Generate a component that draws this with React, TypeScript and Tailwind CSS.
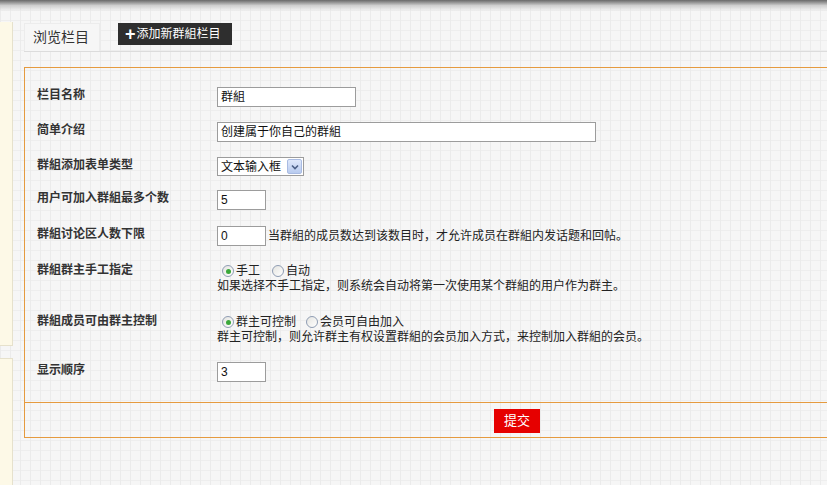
const font = "font-['Liberation_Sans','Noto_Sans_CJK_SC',sans-serif]";

function TextInput({ value, w }: { value: string; w: string }) {
  return (
    <div
      className={`${w} h-[20px] border border-[#9c9c9c] bg-white pl-[3px] text-[12px] leading-[18px] text-[#111]`}
    >
      {value}
    </div>
  );
}

function Radio({ checked, label }: { checked?: boolean; label: string }) {
  return (
    <span className="flex items-center">
      <span className="flex h-[12px] w-[12px] items-center justify-center rounded-full border border-[#8f9db3] bg-[linear-gradient(135deg,#e4e4e0,#ffffff)]">
        {checked && <span className="h-[5px] w-[5px] rounded-full bg-[#3aa83a]" />}
      </span>
      <span className="ml-[2px]">{label}</span>
    </span>
  );
}

function Row({ label, h, children }: { label: string; h: string; children: React.ReactNode }) {
  return (
    <div className={`flex items-start ${h}`}>
      <div className="w-[192px] shrink-0 pl-[12px] pt-[1px] text-[12px] font-bold leading-[14px] text-[#333]">
        {label}
      </div>
      <div className="text-[12px] leading-[14px] text-[#222]">{children}</div>
    </div>
  );
}

export default function App() {
  return (
    <div
      className={`relative h-[485px] w-[827px] overflow-hidden bg-[#f6f6f6] bg-[linear-gradient(to_right,#ebebeb_1px,transparent_1px),linear-gradient(to_bottom,#eeeeee_1px,transparent_1px)] bg-[size:10px_10px] ${font}`}
    >
      {/* top shadow */}
      <div className="absolute inset-x-0 top-0 h-[11px] bg-linear-to-b from-[#6a6a6a] via-[#cfcfcf] to-transparent" />

      <div className="flex h-full">
        {/* left sidebar */}
        <div className="flex w-[13px] shrink-0 flex-col pt-[22px]">
          <div className="h-[324px] border-r border-b border-[#e6e1cc] bg-[#fdf9e7]" />
          <div className="mt-[12px] flex-1 border-r border-t border-[#e6e1cc] bg-[#fdf9e7]" />
        </div>

        <div className="pl-[11px] pt-[23px]">
          {/* tabs */}
          <div className="flex h-[29px] w-[820px] items-start border-b border-[#dcdcdc]">
            <div className="flex h-[28px] w-[76px] items-center border border-b-0 border-[#ececec] bg-[#f6f6f6] pl-[8px] text-[14px] text-[#333]">
              浏览栏目
            </div>
            <div className="ml-[18px] flex h-[22px] w-[114px] items-center bg-[#2e2e2e] pl-[7px] text-[12px] text-white">
              <span className="mr-[1px] text-[18px] font-extrabold leading-none">+</span>
              添加新群組栏目
            </div>
          </div>

          {/* form box */}
          <div className="mt-[15px] w-[820px] border border-[#e59a3e]">
            <div className="pt-[19px]">
              <Row label="栏目名称" h="h-[35px]">
                <TextInput value="群組" w="w-[139px]" />
              </Row>
              <Row label="简单介绍" h="h-[35px]">
                <TextInput value="创建属于你自己的群組" w="w-[379px]" />
              </Row>
              <Row label="群組添加表单类型" h="h-[33px]">
                <div className="flex h-[19px] w-[87px] items-center border border-[#9c9c9c] bg-white">
                  <span className="flex-1 pl-[3px] text-[12px] text-[#111]">文本输入框</span>
                  <span className="mr-[1px] flex h-[15px] w-[15px] items-center justify-center rounded-[2px] border border-[#a9bbe2] bg-linear-to-b from-[#dfe8fb] to-[#b8cbef]">
                    <svg width="8" height="6" viewBox="0 0 8 6">
                      <path d="M1 1.5 L4 4.5 L7 1.5" fill="none" stroke="#4b5f86" strokeWidth="1.6" />
                    </svg>
                  </span>
                </div>
              </Row>
              <Row label="用户可加入群組最多个数" h="h-[36px]">
                <TextInput value="5" w="w-[49px]" />
              </Row>
              <Row label="群組讨论区人数下限" h="h-[36px]">
                <div className="flex items-center">
                  <TextInput value="0" w="w-[49px]" />
                  <span className="ml-[2px]">当群組的成员数达到该数目时，才允许成员在群組内发话题和回帖。</span>
                </div>
              </Row>
              <Row label="群組群主手工指定" h="h-[51px]">
                <div className="pt-[2px]">
                  <div className="flex h-[14px] items-center gap-[12px] pl-[5px]">
                    <Radio checked label="手工" />
                    <Radio label="自动" />
                  </div>
                  <div className="mt-[1px]">如果选择不手工指定，则系统会自动将第一次使用某个群組的用户作为群主。</div>
                </div>
              </Row>
              <Row label="群組成员可由群主控制" h="h-[49px]">
                <div className="pt-[2px]">
                  <div className="flex h-[14px] items-center gap-[10px] pl-[5px]">
                    <Radio checked label="群主可控制" />
                    <Radio label="会员可自由加入" />
                  </div>
                  <div className="mt-[1px]">群主可控制，则允许群主有权设置群組的会员加入方式，来控制加入群組的会员。</div>
                </div>
              </Row>
              <Row label="显示顺序" h="h-[40px]">
                <TextInput value="3" w="w-[49px]" />
              </Row>
            </div>

            <div className="h-[35px] border-t border-[#e59a3e] pl-[469px] pt-[6px]">
              <div className="flex h-[24px] w-[46px] items-center justify-center bg-[#e60000] text-[13px] text-white">
                提交
              </div>
            </div>
          </div>
        </div>
      </div>
    </div>
  );
}
